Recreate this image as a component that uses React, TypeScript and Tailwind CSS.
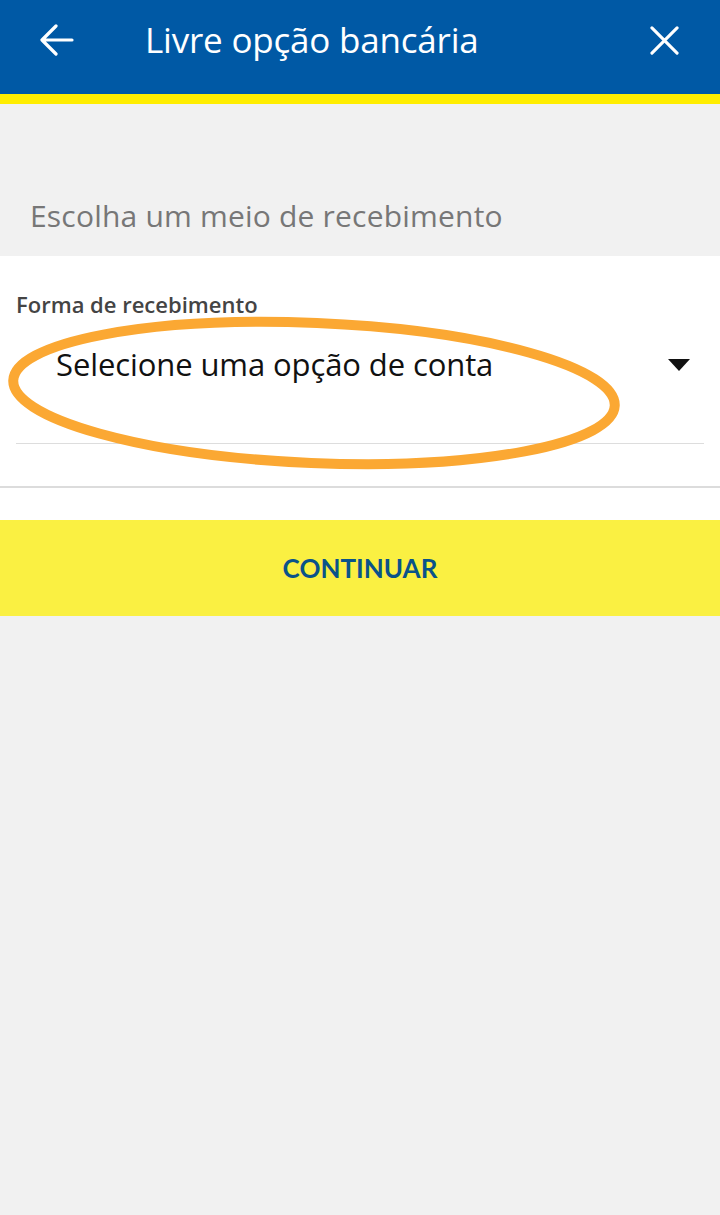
import React from "react";

const font = { fontFamily: "'Open Sans', Lato, sans-serif" };

export default function App() {
  return (
    <div className="relative min-h-[1215px] w-[720px] bg-[#f1f1f1]" style={font}>
      {/* cabeçalho */}
      <header className="flex h-[94px] items-start bg-[#0059a5] pt-[17px] text-white">
        <button className="flex h-[46px] w-[112px] items-center pl-[40px]">
          <svg width="34" height="32" viewBox="0 0 34 32" fill="none" stroke="white" strokeWidth="3.2" strokeLinecap="round" strokeLinejoin="round">
            <path d="M32 16H3M16 2L2 16l14 14" />
          </svg>
        </button>
        <h1 className="ml-[33px] flex-1 text-[35px] leading-[46px] tracking-[-0.2px]">Livre opção bancária</h1>
        <button className="flex h-[46px] w-[80px] items-center justify-start pl-[10px]">
          <svg width="29" height="29" viewBox="0 0 30 30" fill="none" stroke="white" strokeWidth="3.2" strokeLinecap="round">
            <path d="M2 2l26 26M28 2L2 28" />
          </svg>
        </button>
      </header>
      <div className="h-[10px] bg-[#ffed00]" />

      <div className="h-[152px] pl-[30px] pt-[92px]">
        <p className="text-[30px] leading-[40px] tracking-[0.2px] text-[#777777]">Escolha um meio de recebimento</p>
      </div>

      <section className="bg-white">
        <div className="px-[16px] pt-[34px]">
          <label className="block text-[22px] font-semibold leading-[28px] text-[#444444]">Forma de recebimento</label>
          <div className="flex h-[126px] items-start justify-between border-b border-[#dddddd] pl-[40px] pr-[14px] pt-[26px]">
            <span className="text-[31px] leading-[40px] tracking-[-0.1px] text-[#111111]">Selecione uma opção de conta</span>
            <svg width="22" height="12" viewBox="0 0 22 12" className="mt-[15px]">
              <path d="M0 0h22L11 12z" fill="#111" />
            </svg>
          </div>
        </div>
        <div className="h-[44px] border-b-2 border-[#dcdcdc]" />
        <div className="h-[32px]" />
      </section>

      <button
        className="flex h-[96px] w-full items-center justify-center bg-[#faf042] text-[26px] font-bold text-[#0a5389]"
        style={{ fontFamily: "Lato, sans-serif" }}
      >
        CONTINUAR
      </button>

      {/* marcação laranja sobre o campo */}
      <svg className="pointer-events-none absolute left-0 top-0" width="720" height="520">
        <ellipse cx="314" cy="393" rx="301" ry="70" transform="rotate(2.4 314 393)" fill="none" stroke="#fba833" strokeWidth="10" />
      </svg>
    </div>
  );
}
